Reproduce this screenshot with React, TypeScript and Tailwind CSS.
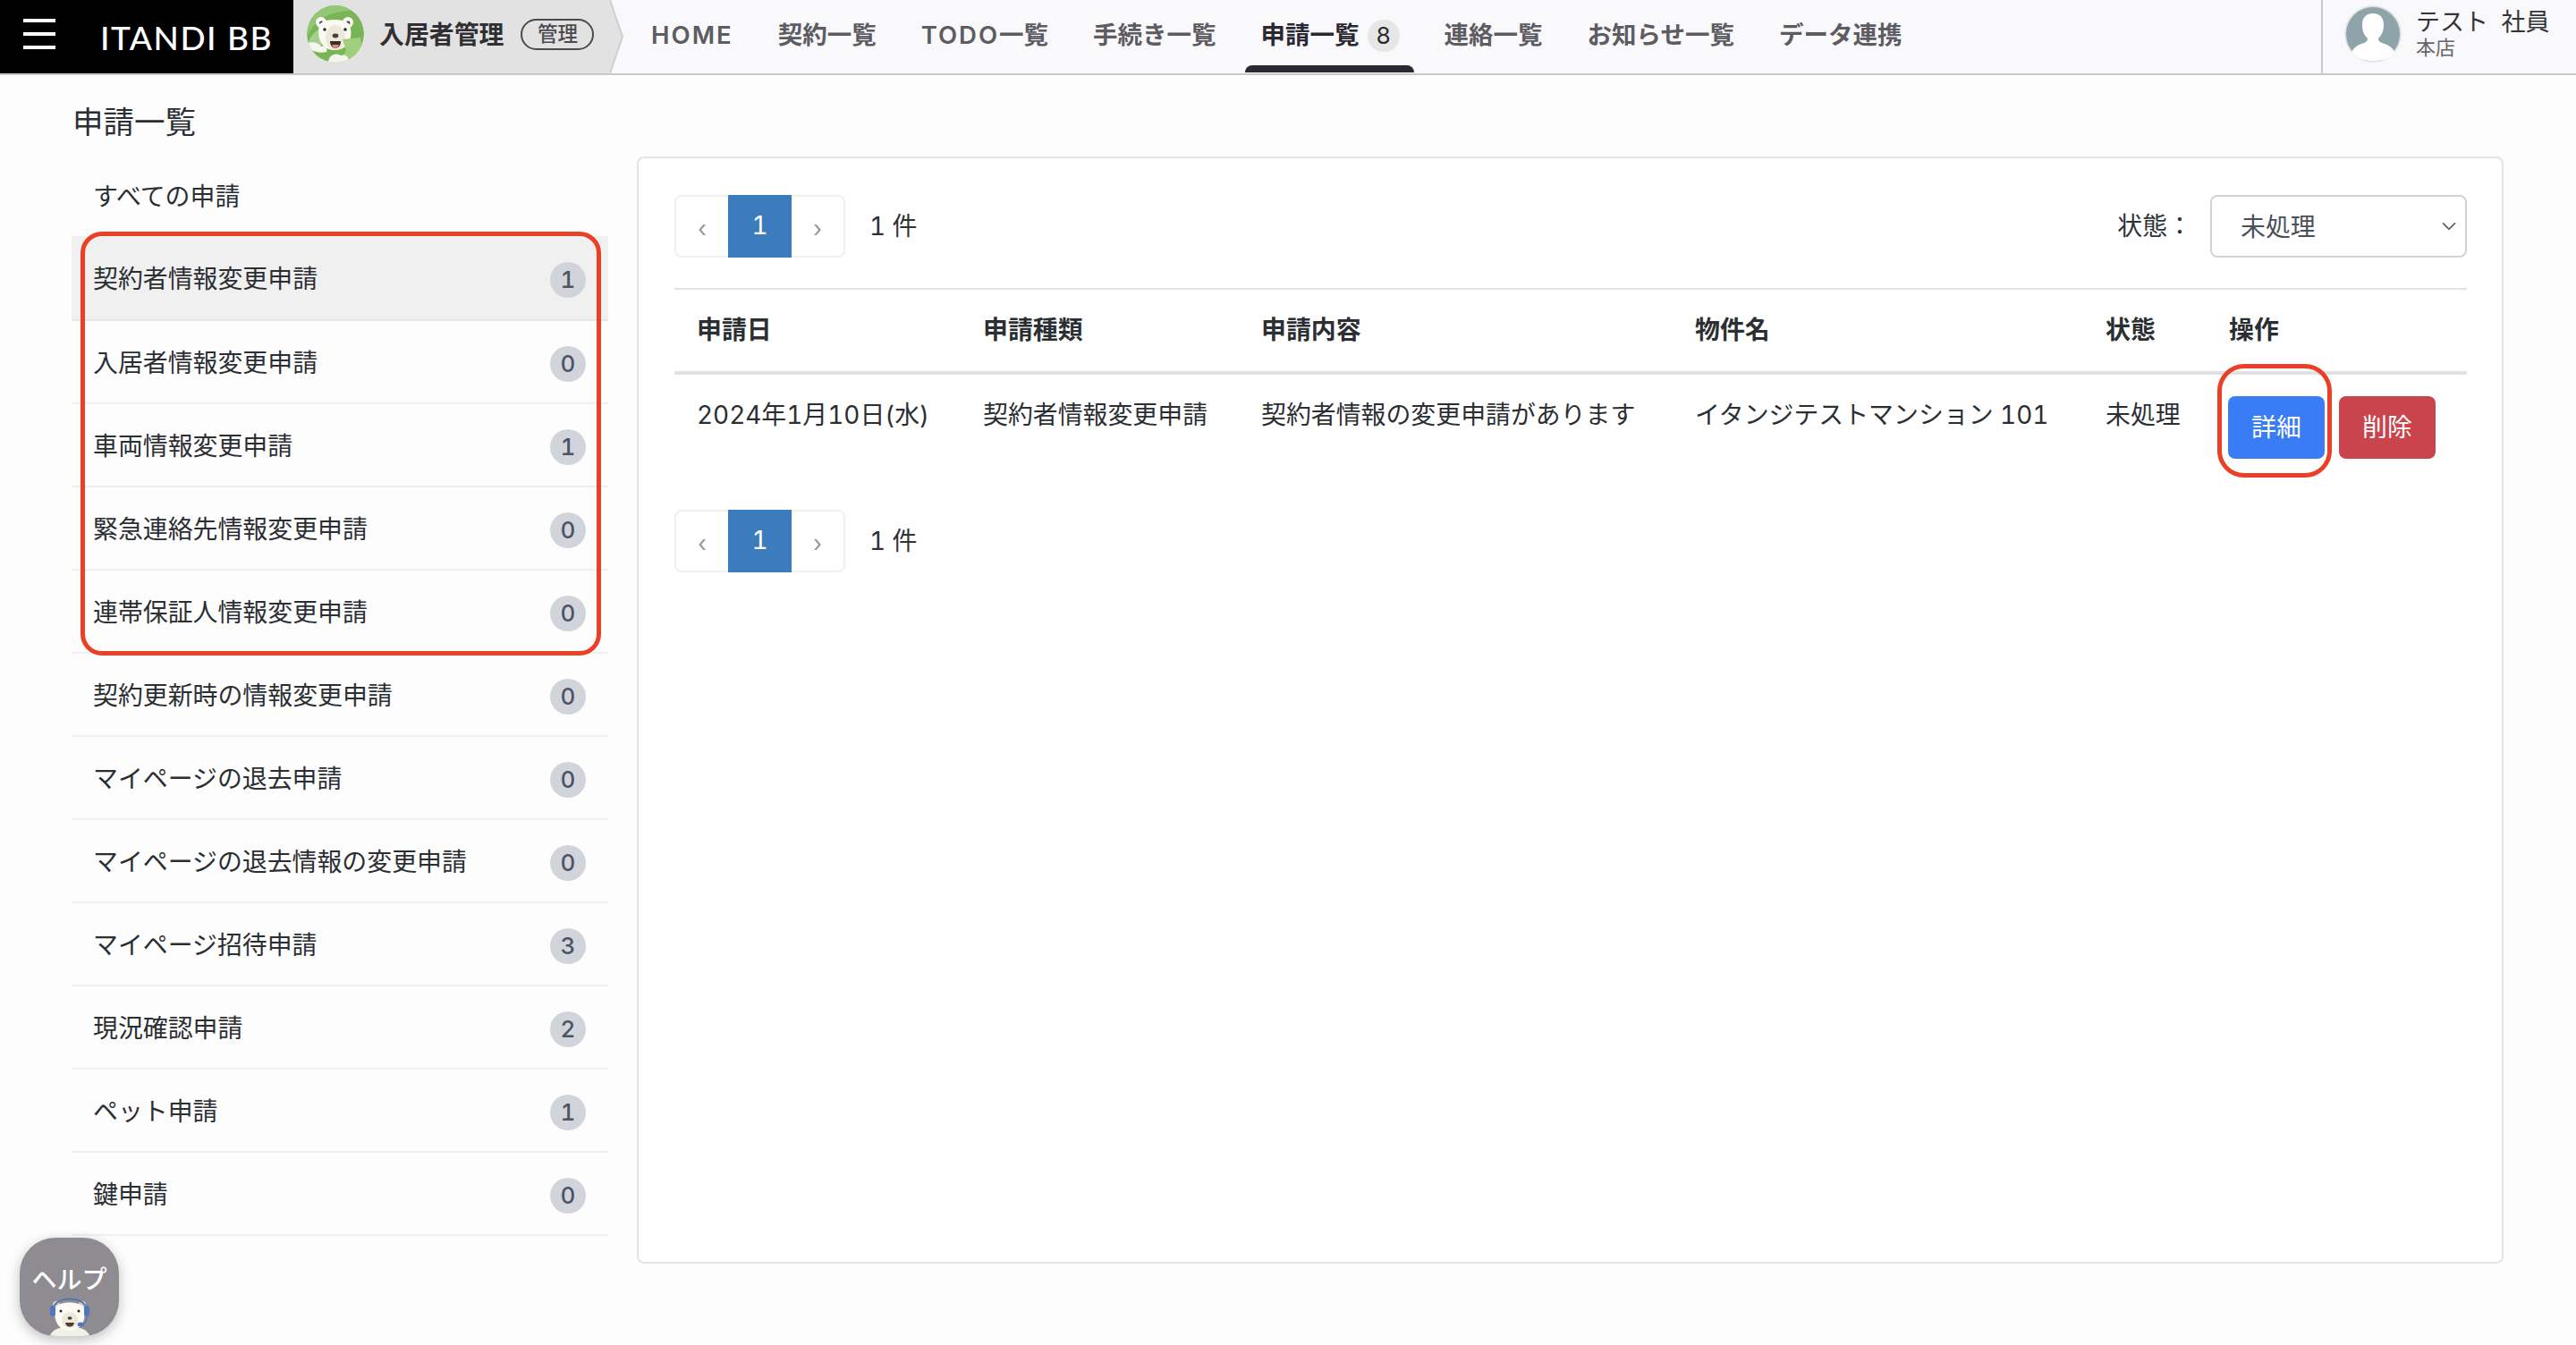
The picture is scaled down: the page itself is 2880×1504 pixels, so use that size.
import { ChevronDown } from "lucide-react";

const navItems = ["契約一覧"];
const navItemsAfter = ["連絡一覧", "お知らせ一覧", "データ連携"];

const sideItems = [
  { label: "契約者情報変更申請", count: 1, active: true },
  { label: "入居者情報変更申請", count: 0 },
  { label: "車両情報変更申請", count: 1 },
  { label: "緊急連絡先情報変更申請", count: 0 },
  { label: "連帯保証人情報変更申請", count: 0 },
  { label: "契約更新時の情報変更申請", count: 0 },
  { label: "マイページの退去申請", count: 0 },
  { label: "マイページの退去情報の変更申請", count: 0 },
  { label: "マイページ招待申請", count: 3 },
  { label: "現況確認申請", count: 2 },
  { label: "ペット申請", count: 1 },
  { label: "鍵申請", count: 0 },
];

function BearLogo() {
  return (
    <svg viewBox="0 0 64 64" className="w-[64px] h-[64px] shrink-0 rounded-full">
      <circle cx="32" cy="32" r="32" fill="#79b556" />
      <path d="M0 36 C8 16 24 6 52 6 L46 0 L20 0 C8 6 0 20 0 36Z" fill="#93c777" />
      <path d="M0 44 C4 34 10 28 18 24 L16 50 L4 52Z" fill="#a3d08b" />
      <circle cx="16" cy="19" r="6" fill="#fbfaf2" />
      <circle cx="46" cy="19" r="6" fill="#fbfaf2" />
      <circle cx="16.500" cy="20" r="2.400" fill="#39352f" />
      <circle cx="46" cy="20" r="2.400" fill="#39352f" />
      <path d="M14 22 C16 14 46 14 48 22 C52 34 48 50 31 50 C15 50 11 34 14 22Z" fill="#fbfaf2" />
      <ellipse cx="32" cy="36" rx="11" ry="14" fill="#ece9da" />
      <circle cx="20" cy="27" r="1.800" fill="#2e2a25" />
      <circle cx="43" cy="27" r="1.800" fill="#2e2a25" />
      <ellipse cx="32" cy="34" rx="3.400" ry="2.400" fill="#4a423a" />
      <path d="M26 40 H38 C38 46 34 48 32 48 C30 48 26 46 26 40Z" fill="#3f2d27" />
      <path d="M28 44 H36 C35 47 33 48 32 48 C31 48 29 47 28 44Z" fill="#e58b74" />
      <path d="M40 38 L60 36 L62 46 L50 64 L36 64 L44 50Z" fill="#9fcf7c" />
      <path d="M2 42 C6 40 14 42 16 46 C20 44 24 48 22 52 C16 54 8 52 2 48Z" fill="#f4f6ee" />
      <path d="M24 64 C24 56 32 52 38 56 C44 54 48 58 46 64Z" fill="#f4f6ee" />
    </svg>
  );
}

function HelpBear() {
  return (
    <svg viewBox="0 0 46 45" className="w-[48px] h-[45px]">
      <path d="M0 45 C4 36 10 34 23 34 C36 34 42 36 46 45Z" fill="#f2f1e7" />
      <circle cx="8" cy="9" r="4" fill="#dcd9c8" />
      <circle cx="37" cy="9" r="4" fill="#dcd9c8" />
      <path d="M7 14 C7 4 38 4 39 14 C42 28 34 38 23 38 C12 38 4 28 7 14Z" fill="#fbfaf3" />
      <ellipse cx="23" cy="26" rx="9" ry="9" fill="#ece9dc" />
      <circle cx="13" cy="16" r="1.500" fill="#26231f" />
      <circle cx="33" cy="16" r="1.500" fill="#26231f" />
      <ellipse cx="23" cy="24" rx="2.500" ry="1.800" fill="#4a423a" />
      <path d="M18 29 H28 C27 33 25 33.500 23 33.500 C21 33.500 19 33 18 29Z" fill="#5a3a30" />
      <path d="M4 16 C4 -2 42 -2 42 16" fill="none" stroke="#5077b8" strokeWidth="2" />
      <rect x="1" y="10" width="6" height="12" rx="3" fill="#5077b8" />
      <rect x="39" y="10" width="6" height="12" rx="3" fill="#5077b8" />
      <path d="M42 22 C42 28 40 30 36 31" fill="none" stroke="#5077b8" strokeWidth="1.500" />
      <ellipse cx="35" cy="31" rx="3.500" ry="2.500" fill="#5077b8" />
    </svg>
  );
}

function Pagination() {
  return (
    <div className="flex items-center">
      <div className="flex h-[70px] items-center rounded-[8px] border-2 border-[#f0f0f1]">
        <span className="flex w-[58px] justify-center pt-1 text-[26px] text-[#94979c]">‹</span>
        <span className="flex h-[70px] w-[71px] items-center justify-center bg-[#3c7cbd] text-[27.900px] text-white">1</span>
        <span className="flex w-[58px] justify-center pt-1 text-[26px] text-[#94979c]">›</span>
      </div>
      <span className="ml-[27px] pt-[2px] whitespace-pre text-[#2f3338]">1 件</span>
    </div>
  );
}

export default function App() {
  return (
    <div className="relative h-[1504px] overflow-hidden bg-[#fdfdfd] font-['Inter','Noto_Sans_CJK_JP',sans-serif] text-[27.900px] text-[#2b2f33] tabular-nums">
      <header className="flex h-[84px] border-b-2 border-[#c9c9cb] bg-[#f9f9fb]">
        <div className="flex w-[328px] items-center bg-black pl-[26px]">
          <div className="mb-[6px] flex w-[36px] flex-col gap-[11px]">
            <span className="h-[4px] bg-white" />
            <span className="h-[4px] bg-white" />
            <span className="h-[4px] bg-white" />
          </div>
          <span className="ml-[50px] font-['Lato',sans-serif] text-[37px] leading-none font-medium tracking-[1.500px] text-white">ITANDI BB</span>
        </div>
        <div className="relative flex w-[354px] items-center bg-[#e2e2e2] pb-[6px] pl-[15px]">
          <BearLogo />
          <span className="ml-[17px] pt-[3px] font-semibold text-[#303033]">入居者管理</span>
          <span className="ml-[19px] flex h-[35px] w-[82px] items-center justify-center rounded-full border-2 border-[#4b4b50] text-[22.500px] font-medium text-[#4b4b50]">管理</span>
          <svg viewBox="0 0 16 82" className="absolute top-0 left-full h-[82px] w-[16px]">
            <path d="M0 82 L14 41 L0 0" fill="#e2e2e2" stroke="#cfcfd1" strokeWidth="2" />
          </svg>
        </div>
        <nav className="ml-[46px] flex items-center gap-[50px] pb-[3px] text-[27.500px] font-semibold text-[#5c5c62]">
          <span className="tracking-[2px]">HOME</span>
          {navItems.map((item) => (
            <span key={item}>{item}</span>
          ))}
          <span><span className="tracking-[2px]">TODO</span>一覧</span>
          <span>手続き一覧</span>
          <span className="relative -mb-[3px] flex h-full items-center gap-[9px] pb-[3px] text-[#2a2833]">
            申請一覧
            <span className="flex h-[36px] w-[36px] items-center justify-center rounded-full bg-[#e6e6e6] text-[26px] font-normal">8</span>
            <span className="absolute -right-[16px] bottom-0 -left-[18px] h-[8px] rounded-t-[8px] bg-[#2a2833]" />
          </span>
          {navItemsAfter.map((item) => (
            <span key={item}>{item}</span>
          ))}
        </nav>
        <div className="ml-auto flex w-[285px] items-center border-l-2 border-[#c9c9cb] pb-[6px] pl-[24px]">
          <svg viewBox="0 0 64 64" className="h-[64px] w-[64px] shrink-0 rounded-full">
            <circle cx="32" cy="32" r="31" fill="#8fa3aa" stroke="#dfe3e4" strokeWidth="2" />
            <path d="M32 9 C40 9 44 14 44 22 C44 30 41 34 38 37 C38 40 40 41 42 42 C50 44 56 49 56 53 C50 60 41 62 32 62 C23 62 14 60 8 53 C9 49 14 44 22 42 C24 41 26 40 26 37 C23 34 20 30 20 22 C20 14 24 9 32 9Z" fill="#fff" />
          </svg>
          <div className="mb-[2px] ml-[16px] flex flex-col">
            <span className="text-[27px] leading-[31px] whitespace-pre text-[#33333a]">テスト  社員</span>
            <span className="text-[22px] leading-[26px] text-[#66666a]">本店</span>
          </div>
        </div>
      </header>

      <div className="flex pr-[81px] pl-[80px]">
        <aside className="mr-[32px] w-[600px] shrink-0">
          <h1 className="h-[88px] pt-[32px] pl-[1px] text-[34.500px] leading-[42px] font-normal text-[#2b2f33]">申請一覧</h1>
          <div className="flex h-[92px] items-center pt-[5px] pl-[24px]">すべての申請</div>
          <div className="relative">
            <ul>
              {sideItems.map((item) => (
                <li
                  key={item.label}
                  className={`flex items-center justify-between border-b-2 pt-1 pr-[25px] pl-[24px] ${
                    item.active ? "h-[95px] border-[#e6e6e6] bg-[#f0f0f0]" : "h-[93px] border-[#f0f0f0]"
                  }`}
                >
                  <span>{item.label}</span>
                  <span className="flex h-[40px] w-[40px] items-center justify-center rounded-full bg-[#d1d5db] text-[26px] font-medium text-[#4b5563]">
                    {item.count}
                  </span>
                </li>
              ))}
            </ul>
            <div className="absolute top-[-5px] left-[10px] h-[474px] w-[582px] rounded-[24px] border-[5px] border-[#ea4027]" />
          </div>
        </aside>

        <main className="mt-[91px] h-[1238px] grow rounded-[8px] border-2 border-[#e3e4e6] bg-white pt-[41px] pr-[39px] pl-[40px]">
          <div className="flex items-center justify-between">
            <Pagination />
            <div className="flex items-center">
              <span className="mr-[20px] pt-[2px] whitespace-pre text-[#2f3338]">状態：</span>
              <div className="relative">
                <select className="h-[70px] w-[287px] appearance-none rounded-[8px] border-2 border-[#ced4da] bg-white pt-[4px] pl-[32px] text-[#495057] outline-none">
                  <option>未処理</option>
                </select>
                <ChevronDown className="pointer-events-none absolute top-[22px] right-[7px] h-[26px] w-[26px] text-[#4b5158]" strokeWidth={1.500} />
              </div>
            </div>
          </div>

          <table className="mt-[34px] w-full table-fixed border-t-2 border-[#e0e3e6] text-left">
            <colgroup>
              <col className="w-[320px]" />
              <col className="w-[311px]" />
              <col className="w-[485px]" />
              <col className="w-[459px]" />
              <col className="w-[137px]" />
              <col />
            </colgroup>
            <thead>
              <tr className="h-[94px] border-b-4 border-[#dee2e6] font-bold">
                <th className="pt-[1px] pl-[25px]">申請日</th>
                <th className="pt-[1px] pl-[25px]">申請種類</th>
                <th className="pt-[1px] pl-[25px]">申請内容</th>
                <th className="pt-[1px] pl-[25px]">物件名</th>
                <th className="pt-[1px] pl-[25px]">状態</th>
                <th className="pt-[1px] pl-[26px]">操作</th>
              </tr>
            </thead>
            <tbody>
              <tr className="align-top leading-[42px]">
                <td className="pt-[24px] pl-[25px] whitespace-nowrap">2024年1月10日(水)</td>
                <td className="pt-[24px] pl-[25px]">契約者情報変更申請</td>
                <td className="pt-[24px] pl-[25px] whitespace-nowrap">契約者情報の変更申請があります</td>
                <td className="pt-[24px] pl-[25px] whitespace-nowrap">イタンジテストマンション 101</td>
                <td className="pt-[24px] pl-[25px]">未処理</td>
                <td className="py-[24px] pl-[25px]">
                  <div className="relative flex gap-[16px]">
                    <button className="h-[70px] w-[108px] rounded-[8px] bg-[#3a7bf6] text-white">詳細</button>
                    <button className="h-[70px] w-[108px] rounded-[8px] bg-[#c9444d] text-white">削除</button>
                    <div className="absolute top-[-36px] left-[-12px] h-[127px] w-[128px] rounded-[30px] border-[5px] border-[#ea4027]" />
                  </div>
                </td>
              </tr>
            </tbody>
          </table>

          <div className="mt-[33px]">
            <Pagination />
          </div>
        </main>
      </div>

      <div className="absolute top-[1384px] left-[22px] flex h-[110px] w-[111px] flex-col items-center overflow-hidden rounded-[40px] bg-[#8e8c91] pt-[31px] shadow-[0_4px_14px_rgba(0,0,0,0.25)]">
        <span className="text-[28px] leading-[32px] font-medium text-white">ヘルプ</span>
        <div className="mt-[3px]">
          <HelpBear />
        </div>
      </div>
    </div>
  );
}
